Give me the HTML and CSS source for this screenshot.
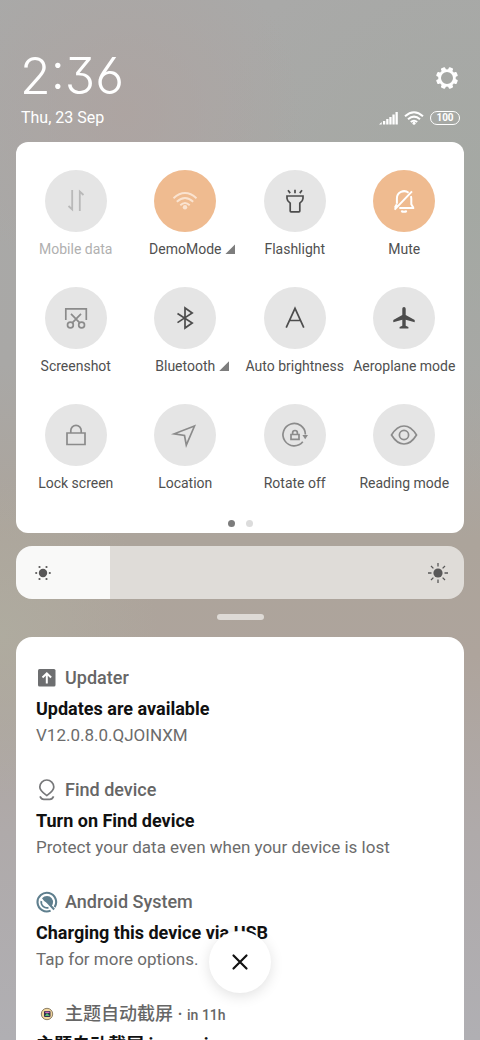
FILE: index.html
```html
<!DOCTYPE html>
<html lang="en">
<head>
<meta charset="utf-8">
<meta name="viewport" content="width=device-width, initial-scale=1">
<title>Control centre</title>
<link rel="stylesheet" href="styles.css">
</head>
<body>
<header class="top">
  <div class="top-row">
    <time class="clock">2:36</time>
    <button class="settings" aria-label="Settings">
      <svg width="24" height="24" viewBox="0 0 24 24"><path fill="none" stroke="currentColor" stroke-width="2.800" d="M12 4.600a7.400 7.400 0 1 1 0 14.800a7.400 7.400 0 1 1 0-14.800z"/><g fill="currentColor"><g id="teeth"><rect x="9.700" y="1" width="4.600" height="4" rx="1" transform="rotate(22.5 12 12)"/><rect x="9.700" y="1" width="4.600" height="4" rx="1" transform="rotate(67.5 12 12)"/><rect x="9.700" y="1" width="4.600" height="4" rx="1" transform="rotate(112.5 12 12)"/><rect x="9.700" y="1" width="4.600" height="4" rx="1" transform="rotate(157.5 12 12)"/></g><use href="#teeth" transform="rotate(180 12 12)"/></g></svg>
    </button>
  </div>
  <div class="top-row">
    <span class="date">Thu, 23 Sep</span>
    <div class="status">
      <svg width="19" height="14" viewBox="0 0 19 14" fill="currentColor" role="img" aria-label="Signal"><path d="M0 13.500l2.700-2.500v2.500zM4 10h2.300v3.500H4zM7.200 8h2.300v5.500H7.200zM10.300 6h2.300v7.500h-2.300zM13.400 3.500h2.300v10h-2.300zM16.500 1h2.300v12.500h-2.300z"/></svg>
      <svg width="20" height="14" viewBox="0 0 20 14" fill="none" stroke="currentColor" stroke-width="2" role="img" aria-label="Wi-Fi"><path d="M1 5.300Q10-2.700 19 5.300M4 8.300Q10 3 16 8.300M6.800 11.100Q10 8.300 13.200 11.100"/><circle cx="10" cy="12.300" r="1.500" fill="currentColor" stroke="none"/></svg>
      <span class="battery">100</span>
    </div>
  </div>
</header>

<main>
<section class="panel" aria-label="Quick settings">
  <div class="tiles">
    <button class="tile disabled"><span class="disc"><svg viewBox="0 0 32 32"><path d="M12.200 5v19.500L8.500 21M19.800 26V6.500l3.700 3.500" stroke-width="1.800"/></svg></span><span class="label">Mobile data</span></button>
    <button class="tile on wifi"><span class="disc"><svg viewBox="0 0 32 32"><path d="M4.500 13.200Q16 3 27.500 13.200M7.800 16.800Q16 9.200 24.200 16.800M11.300 20.300Q16 15.800 20.700 20.300" stroke-width="1.900"/><circle class="solid" cx="16" cy="22.300" r="2.200"/></svg></span><span class="label">DemoMode<i class="more"></i></span></button>
    <button class="tile dark"><span class="disc"><svg viewBox="0 0 32 32"><path d="M8 11h16v2.500q0 2.200-3.200 4.700V26q0 .8-.8.800h-8q-.8 0-.8-.8v-7.800Q8 15.700 8 13.500zM16 4.800v3.400M9 5.300l2.200 2.800M23 5.300l-2.200 2.800"/></svg></span><span class="label">Flashlight</span></button>
    <button class="tile on"><span class="disc"><svg viewBox="0 0 32 32"><path d="M8.900 18.800V13.500a7.200 7.200 0 0 1 11.700-5.700M22.800 11.200q.5 1.200.5 2.500v5.500l1.900 3.300v.4H11.300M6.800 22.700l2-3.500M6.600 24.600L24 6.400M13.200 26q2.800 1.500 5.600 0" stroke-width="2"/></svg></span><span class="label">Mute</span></button>

    <button class="tile"><span class="disc"><svg viewBox="0 0 32 32"><path d="M5.800 18V6.800h20.500V18M11 11.800l9 9.300M21 11.800l-9 9.300"/><circle cx="10.400" cy="23" r="2.900"/><circle cx="21.600" cy="23" r="2.900"/></svg></span><span class="label">Screenshot</span></button>
    <button class="tile dark"><span class="disc"><svg viewBox="0 0 32 32"><path d="M8.500 11.500l14.700 9.500-7.200 5V6l7.200 5L8.500 20.600"/></svg></span><span class="label">Bluetooth<i class="more"></i></span></button>
    <button class="tile dark"><span class="disc"><svg viewBox="0 0 32 32"><path d="M7.200 25.700L16 6.300l8.800 19.400M10.600 18.500h10.800"/></svg></span><span class="label">Auto brightness</span></button>
    <button class="tile dark"><span class="disc"><svg viewBox="0 0 32 32"><path class="solid" d="M16 5c1 0 1.700.8 1.700 1.900v6.200l9 5v2.200l-9-2.500v6l2.700 1.300v1.500h-8.800v-1.500l2.700-1.300v-6l-9 2.500v-2.200l9-5V6.900C14.300 5.800 15 5 16 5z"/></svg></span><span class="label">Aeroplane mode</span></button>

    <button class="tile"><span class="disc"><svg viewBox="0 0 32 32"><path d="M7 14h18v11.500H7zM10.800 14v-2.500a5.200 5.200 0 0 1 10.400 0V14"/></svg></span><span class="label">Lock screen</span></button>
    <button class="tile"><span class="disc"><svg viewBox="0 0 32 32"><path d="M25.500 7L17.300 26l-1.800-9.500L5.200 14.800z"/></svg></span><span class="label">Location</span></button>
    <button class="tile"><span class="disc"><svg viewBox="0 0 32 32"><path d="M23.800 22.800a11.200 11.200 0 1 1 2.600-7.400M12 15.500h8v4.800h-8zM13.600 15.500v-1.600a2.400 2.400 0 0 1 4.800 0v1.600"/><path class="solid" d="M23.400 16h5.600l-2.800 4.200z"/></svg></span><span class="label">Rotate off</span></button>
    <button class="tile"><span class="disc"><svg viewBox="0 0 32 32"><path d="M3.500 16Q9 7 16 7t12.500 9Q23 25 16 25T3.500 16z"/><circle cx="16" cy="16" r="4.600"/></svg></span><span class="label">Reading mode</span></button>
  </div>
  <div class="pager">
    <button class="dot current" aria-label="Page 1"></button>
    <button class="dot" aria-label="Page 2"></button>
  </div>
</section>

<div class="brightness">
  <input type="range" min="0" max="100" value="21" aria-label="Brightness" style="--level:21%">
  <svg class="dim" width="18" height="18" viewBox="0 0 18 18" fill="currentColor"><circle cx="9" cy="9" r="4.200"/><circle cx="2.200" cy="9" r="1.100"/><circle cx="15.800" cy="9" r="1.100"/><circle cx="5.500" cy="3" r="1.100"/><circle cx="12.500" cy="3" r="1.100"/><circle cx="5.500" cy="15" r="1.100"/><circle cx="12.500" cy="15" r="1.100"/></svg>
  <svg class="bright" width="22" height="22" viewBox="0 0 22 22" fill="currentColor"><circle cx="11" cy="11" r="4.600"/><path fill="none" stroke="currentColor" stroke-width="1.300" d="M11 1v3.500M11 17.500V21M1 11h3.500M17.500 11H21M4 4l2.400 2.400M15.600 15.600L18 18M4 18l2.400-2.400M15.600 6.400L18 4"/></svg>
</div>
<div class="handle"></div>

<section class="notifications" aria-label="Notifications">
  <article class="note">
    <div class="app"><svg width="22" height="22" viewBox="0 0 22 22"><rect x="2" y="2" width="17.500" height="17.500" rx="1.500" fill="#6d6e70"/><path d="M10.800 16.500V6.700M6.500 10.500l4.300-4.200L15.100 10.500" fill="none" stroke="#fff" stroke-width="2"/></svg><span>Updater</span></div>
    <h2>Updates are available</h2>
    <p>V12.0.8.0.QJOINXM</p>
  </article>
  <article class="note">
    <div class="app"><svg width="22" height="22" viewBox="0 0 22 22" fill="none" stroke="#77787a" stroke-width="1.700"><path d="M10.800 16.500C7.500 14 3.800 11.800 3.800 8a7 7 0 0 1 14 0c0 3.800-3.700 6-7 8.500zM4 17.300q1.300 3 3.800 3h6q2.500 0 3.800-3"/></svg><span>Find device</span></div>
    <h2>Turn on Find device</h2>
    <p>Protect your data even when your device is lost</p>
  </article>
  <article class="note">
    <div class="app"><svg width="22" height="22" viewBox="0 0 22 22" fill="none" stroke="#5f7f8e"><path d="M14.600 19.600A9.300 9.300 0 1 1 18.600 16.200" stroke-width="2.100"/><path fill="#5f7f8e" stroke="none" d="M6 7.300Q8 5 11 5a6 6 0 0 1 5.900 7.300q-.2 1.500-1 2.300l3 3.200-1.500 1.500-6.200-6.800-1.300-1.200q-1.900-.8-3.900-4z"/><path d="M5.300 10a5.800 5.800 0 0 0 7.200 6.600" stroke-width="1.700"/></svg><span>Android System</span></div>
    <h2>Charging this device via USB</h2>
    <p>Tap for more options.</p>
  </article>
  <article class="note">
    <div class="app"><svg width="22" height="22" viewBox="0 0 22 22"><circle cx="11" cy="11" r="5.700" fill="#f3d79c" stroke="#8d8068"/><rect x="8" y="8" width="6.500" height="6" rx="1" fill="#343050"/><path d="M8.800 13l2.200-3 2.800 3z" fill="#55bd73"/><path d="M9.200 8.700h4.300V10H9.200z" fill="#d36bb5"/></svg><span>主题自动截屏 · <small>in 11h</small></span></div>
    <h2>主题自动截屏 is running</h2>
  </article>
</section>
</main>

<button class="clear" aria-label="Clear notifications"><svg width="18" height="18" viewBox="0 0 18 18"><path d="M2.500 2.500l13 13M15.500 2.500l-13 13" fill="none" stroke="currentColor" stroke-width="2.200" stroke-linecap="round"/></svg></button>
</body>
</html>
```

FILE: styles.css
```css
* { box-sizing: border-box; }

body {
  margin: 0;
  height: 100vh;
  overflow: hidden;
  font-family: Roboto, "Noto Sans CJK SC", sans-serif;
  background:
    radial-gradient(circle at 26% 11%, rgba(174, 163, 160, .8), transparent 18%),
    radial-gradient(circle at 100% 20%, rgba(163, 168, 162, .8), transparent 30%),
    radial-gradient(circle at 0% 61%, rgba(175, 173, 160, .8), transparent 20%),
    linear-gradient(#a9a9a8 0%, #a9a8a6 35%, #aca49b 52%, #aea49c 63%, #afaaaa 80%, #b0afb3 100%);
}

button {
  border: 0;
  padding: 0;
  background: none;
  color: inherit;
  font: inherit;
  cursor: pointer;
}

svg { display: block; flex: none; }

.top {
  padding: 45px 20px 13px;
  color: #fff;
}

.top-row {
  display: flex;
  align-items: center;
  justify-content: space-between;
}

.clock {
  font: 300 50px/62px Inter, Roboto, sans-serif;
  font-feature-settings: "cv09", "cv03";
}

.settings { margin: 4px 1px 0 0; }

.date {
  padding-left: 1px;
  font-size: 16px;
  line-height: 22px;
}

.status {
  display: flex;
  align-items: center;
  gap: 6px;
}

.battery {
  width: 30px;
  border: 1px solid #fff;
  border-radius: 8px;
  font-size: 10px;
  font-weight: 700;
  line-height: 12px;
  text-align: center;
}

.panel {
  margin: 0 16px;
  padding: 28px 5px 6px;
  border-radius: 12px;
  background: #fff;
}

.tiles {
  display: grid;
  grid-template-columns: repeat(4, 1fr);
  row-gap: 28px;
}

.tile {
  display: flex;
  flex-direction: column;
  align-items: center;
  gap: 7px;
  color: #8b8b8b;
}

.disc {
  display: grid;
  place-items: center;
  width: 62px;
  height: 62px;
  border-radius: 50%;
  background: #e5e5e5;
}

.disc svg {
  width: 32px;
  height: 32px;
  fill: none;
  stroke: currentColor;
  stroke-width: 1.7;
}

.disc .solid { fill: currentColor; stroke: none; }

.tile.dark { color: #4d4d4d; }
.tile.disabled { color: #b9b9b9; }
.tile.on { color: #fff; }
.tile.wifi { color: #fae3d0; }
.tile.on .disc { background: #efbb90; }

.label {
  position: relative;
  color: #505050;
  font-size: 14px;
  line-height: 20px;
  white-space: nowrap;
}

.disabled .label { color: #b0b0b0; }

.more {
  position: absolute;
  left: 100%;
  bottom: 5px;
  width: 10px;
  height: 10px;
  margin-left: 4px;
  background: #7d7d7d;
  clip-path: polygon(100% 0, 100% 100%, 0 100%);
}

.pager {
  display: flex;
  justify-content: center;
  gap: 11px;
  margin-top: 27px;
}

.dot {
  width: 7px;
  height: 7px;
  border-radius: 50%;
  background: #dcdcdc;
}

.dot.current { background: #7c7c7c; }

.brightness {
  display: grid;
  grid-template-columns: 1fr;
  align-items: center;
  margin: 13px 16px 0;
  color: #595858;
}

.brightness > * { grid-area: 1 / 1; }
.brightness svg { pointer-events: none; }
.dim { margin-left: 18px; }
.bright { margin-right: 15px; justify-self: end; }

.brightness input {
  appearance: none;
  width: 100%;
  height: 53px;
  margin: 0;
  border-radius: 16px;
  background: linear-gradient(to right, #f9f9f8 var(--level), #dfdcd8 var(--level));
}

.brightness input::-webkit-slider-thumb {
  appearance: none;
  width: 1px;
  height: 53px;
}

.handle {
  width: 47px;
  height: 6px;
  margin: 15px auto 17px;
  border-radius: 3px;
  background: #dedad6;
}

.notifications {
  display: flex;
  flex-direction: column;
  gap: 32px;
  margin: 0 16px;
  padding: 30px 20px;
  border-radius: 16px;
  background: #fff;
}

.app {
  display: flex;
  align-items: center;
  gap: 7px;
  height: 22px;
  color: #666;
  font-size: 18px;
  font-weight: 500;
  line-height: 22px;
}

.app small { font-size: 14px; }

.note h2 {
  height: 24px;
  margin: 8px 0 3px;
  color: #111;
  font-size: 18px;
  font-weight: 700;
  line-height: 24px;
}

.note p {
  margin: 0;
  color: #6c6c6c;
  font-size: 17px;
  line-height: 23px;
}

.clear {
  position: fixed;
  left: calc(50% - 31px);
  bottom: 47px;
  display: grid;
  place-items: center;
  width: 62px;
  height: 62px;
  border-radius: 50%;
  background: #fff;
  color: #111;
  box-shadow: 0 3px 14px rgba(0, 0, 0, .12);
}
```
